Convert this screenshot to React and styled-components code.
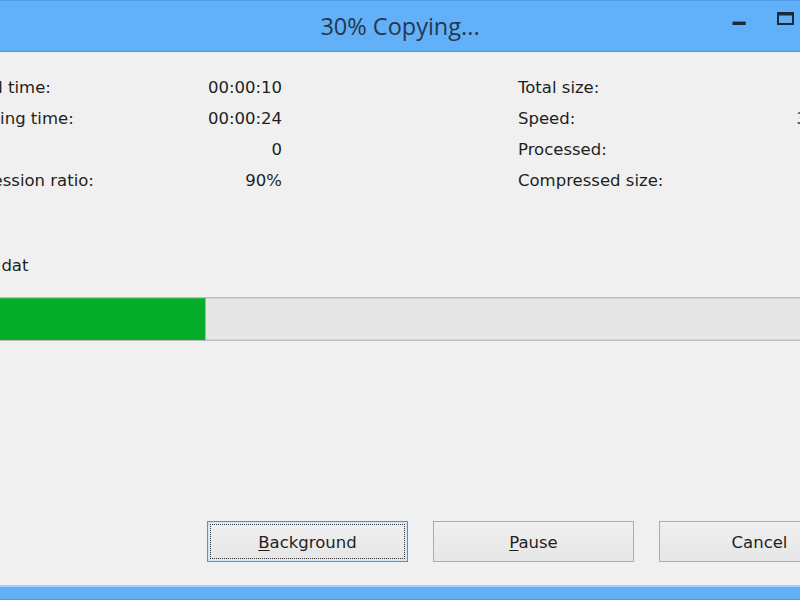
import React from 'react';
import styled, { createGlobalStyle } from 'styled-components';

const GlobalStyle = createGlobalStyle`
  html, body {
    margin: 0;
    padding: 0;
    background: #f0f0f0;
    overflow: hidden;
  }
  #root {
    width: 800px;
    height: 600px;
    overflow: hidden;
  }
`;

const Viewport = styled.div`
  width: 800px;
  height: 600px;
  overflow: hidden;
  background: #f0f0f0;
`;

/* The dialog window is wider than the visible area; it is centred on it */
const Frame = styled.div`
  margin-left: -72px;
  width: 944px;
  height: 600px;
  display: flex;
  flex-direction: column;
  font-family: "DejaVu Sans", Tahoma, sans-serif;
  font-size: 16.5px;
  color: #1e1e1e;
`;

const TitleBar = styled.div`
  flex: none;
  height: 50px;
  background: #62b0f8;
  border-top: 1px solid #519fe9;
  border-bottom: 1px solid #4d96dc;
  display: grid;
  grid-template-columns: 1fr auto 1fr;
`;

const Title = styled.div`
  grid-column: 2;
  align-self: center;
  font-family: "Open Sans", "Noto Sans", sans-serif;
  font-size: 23.5px;
  color: #24384f;
  white-space: nowrap;
`;

const Controls = styled.div`
  grid-column: 3;
  justify-self: end;
  display: flex;
  align-items: flex-start;
  margin-right: 17px;
`;

const CaptionButton = styled.div`
  width: ${(p) => (p.$close ? 47 : 46)}px;
  height: 35px;
  display: flex;
  align-items: center;
  justify-content: center;
  background: ${(p) => (p.$close ? '#c75050' : 'transparent')};
`;

const Body = styled.div`
  flex: 1;
  display: flex;
  flex-direction: column;
  padding: 20px 12px 0 10px;
`;

const Stats = styled.div`
  display: flex;
  gap: 236px;
`;

const StatColumn = styled.div`
  width: ${(p) => p.$width}px;
  display: flex;
  flex-direction: column;
`;

const StatRow = styled.div`
  height: 31px;
  display: flex;
  align-items: center;
  justify-content: space-between;
  white-space: nowrap;
`;

const FileName = styled.div`
  margin-top: 54px;
  height: 31px;
  display: flex;
  align-items: center;
  white-space: nowrap;
`;

const Track = styled.div`
  margin-top: 16px;
  width: 893px;
  height: 44px;
  box-sizing: border-box;
  border: 1px solid #bdbdbd;
  background: #e6e6e6;
  box-shadow: inset 0 1px 0 #d5d5d5, inset 0 -1px 0 #d5d5d5;
  display: flex;
`;

const Fill = styled.div`
  height: 100%;
  box-sizing: border-box;
  background: #06ad2a;
  border-right: 1px solid #72d985;
  border-top: 1px solid #2dbc4a;
`;

const ButtonRow = styled.div`
  margin-top: 180px;
  display: flex;
  justify-content: flex-end;
  gap: 25px;
`;

const Button = styled.div`
  width: 201px;
  height: 41px;
  box-sizing: border-box;
  padding: 2px;
  border: 1px solid ${(p) => (p.$default ? '#4f93d4' : '#acacac')};
  background: linear-gradient(#f0f0f0, #e6e6e6);
  box-shadow: ${(p) => (p.$default ? 'inset 0 0 0 1px #cfe3f5' : 'none')};
  display: flex;
`;

const ButtonFace = styled.div`
  flex: 1;
  display: flex;
  align-items: center;
  justify-content: center;
  padding-top: 1px;
  border: 1px dotted ${(p) => (p.$focus ? '#333' : 'transparent')};
  white-space: nowrap;
`;

const Key = styled.span`
  text-decoration: underline;
  text-underline-offset: 2px;
`;

const BottomEdge = styled.div`
  flex: none;
  height: 15px;
  box-sizing: border-box;
  background: #62b0f8;
  border-top: 2px solid #a8d2f8;
  border-bottom: 1px solid #4f9be2;
`;

const MinimizeIcon = () => (
  <svg width="17" height="13" viewBox="0 0 17 13">
    <rect x="1.5" y="9.6" width="13.2" height="3.4" fill="#1b2a3b" />
  </svg>
);

const MaximizeIcon = () => (
  <svg width="17" height="13" viewBox="0 0 17 13">
    <rect x="1" y="1" width="15" height="11" fill="none" stroke="#1b2a3b" strokeWidth="2" />
    <rect x="0" y="0" width="17" height="3.5" fill="#1b2a3b" />
  </svg>
);

const CloseIcon = () => (
  <svg width="14" height="13" viewBox="0 0 14 13">
    <path d="M1 0.5 L13 12.5 M13 0.5 L1 12.5" stroke="#fff" strokeWidth="2.2" />
  </svg>
);

const leftStats = [
  ['Elapsed time:', '00:00:10'],
  ['Remaining time:', '00:00:24'],
  ['Files:', '0'],
  ['Compression ratio:', '90%'],
];

const rightStats = [
  ['Total size:', ''],
  ['Speed:', '3 MB/s'],
  ['Processed:', ''],
  ['Compressed size:', ''],
];

export default function App() {
  const percent = 30;
  return (
    <Viewport>
      <GlobalStyle />
      <Frame>
        <TitleBar>
          <Title>{percent}% Copying...</Title>
          <Controls>
            <CaptionButton>
              <MinimizeIcon />
            </CaptionButton>
            <CaptionButton>
              <MaximizeIcon />
            </CaptionButton>
            <CaptionButton $close>
              <CloseIcon />
            </CaptionButton>
          </Controls>
        </TitleBar>
        <Body>
          <Stats>
            <StatColumn $width={344}>
              {leftStats.map(([label, value]) => (
                <StatRow key={label}>
                  <span>{label}</span>
                  <span>{value}</span>
                </StatRow>
              ))}
            </StatColumn>
            <StatColumn $width={334}>
              {rightStats.map(([label, value]) => (
                <StatRow key={label}>
                  <span>{label}</span>
                  <span>{value}</span>
                </StatRow>
              ))}
            </StatColumn>
          </Stats>
          <FileName>update.dat</FileName>
          <Track>
            <Fill style={{ width: `${percent}%` }} />
          </Track>
          <ButtonRow>
            <Button $default>
              <ButtonFace $focus>
                <span>
                  <Key>B</Key>ackground
                </span>
              </ButtonFace>
            </Button>
            <Button>
              <ButtonFace>
                <span>
                  <Key>P</Key>ause
                </span>
              </ButtonFace>
            </Button>
            <Button>
              <ButtonFace>Cancel</ButtonFace>
            </Button>
          </ButtonRow>
        </Body>
        <BottomEdge />
      </Frame>
    </Viewport>
  );
}
